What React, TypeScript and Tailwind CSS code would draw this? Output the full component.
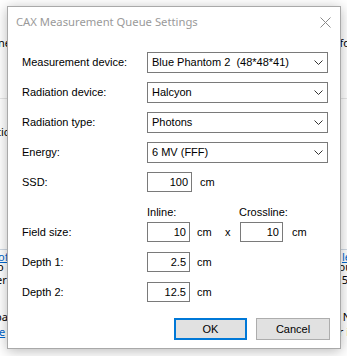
const CONTENT_FONT = "font-['Liberation_Sans',Arial,sans-serif]"

function Chevron() {
  return (
    <svg width="9" height="5" viewBox="0 0 9 5" fill="none" stroke="#333" strokeWidth="1">
      <path d="M0.5 0.5 L4.5 4.5 L8.5 0.5" />
    </svg>
  )
}

function Combo({ value }: { value: string }) {
  return (
    <div className="flex items-center justify-between w-[181px] h-[21px] border border-[#7a7a7a] bg-white pl-[4px] pr-[4px]">
      <span className="whitespace-pre leading-none">{value}</span>
      <Chevron />
    </div>
  )
}

function NumBox({ value, w = 'w-[43px]' }: { value: string; w?: string }) {
  return (
    <div className={`flex items-center justify-end h-[20px] border border-[#7a7a7a] bg-white pr-[3px] ${w}`}>
      <span className="leading-none">{value}</span>
    </div>
  )
}

// page behind the dialog, only its edges show
function Background() {
  return (
    <div className="flex flex-col text-[11px] text-black font-['Noto_Sans',sans-serif]">
      <div className="mt-[37px] h-[12px] leading-[12px] flex justify-between">
        <span className="-ml-[2px]">ne</span>
        <span className="mr-[-3px]">fo</span>
      </div>
      <div className="mt-[49px] h-px bg-[#e6e6e6]" />
      <div className="mt-[27px] h-[12px] leading-[12px] flex justify-between">
        <span className="-ml-[3px]">tic</span>
        <span />
      </div>
      <div className="mt-[111px] h-px bg-[#cfd9e4]" />
      <div className="mt-[2px] h-[10px] leading-[10px] flex justify-between text-[#0066cc]">
        <span className="-ml-[2px] underline">of</span>
        <span className="mr-[-4px] underline">le</span>
      </div>
      <div className="h-[10px] leading-[10px] flex justify-between">
        <span className="-ml-[3px]">o</span>
        <span className="mr-[-5px]">ou</span>
      </div>
      <div className="mt-[3px] h-[10px] leading-[10px] flex justify-between">
        <span className="-ml-[4px]">er</span>
        <span className="mr-[-1px]">5</span>
      </div>
      <div className="mt-[27px] h-[10px] leading-[10px] flex justify-between">
        <span className="-ml-[5px]">pa</span>
        <span className="mr-[-4px]">N</span>
      </div>
      <div className="mt-[5px] h-[10px] leading-[10px] flex justify-between text-[#0066cc]">
        <span className="-ml-[1px] underline">e</span>
        <span className="mr-[-2px] text-black">r i</span>
      </div>
    </div>
  )
}

function Dialog() {
  return (
    <div className="absolute left-[7px] top-[6px] w-[334px] h-[343px] bg-white border border-[#a9a9a9] shadow-[0_2px_12px_rgba(0,0,0,0.28)] flex flex-col">
      {/* title bar */}
      <div className="h-[30px] flex items-center justify-between pl-[8px] pr-[9px]">
        <span className="text-[11.25px] text-[#9a9a9a] font-['Noto_Sans',sans-serif]">CAX Measurement Queue Settings</span>
        <svg width="11" height="11" viewBox="0 0 11 11" stroke="#8a8a8a" strokeWidth="1">
          <path d="M0.5 0.5 L10.5 10.5 M10.5 0.5 L0.5 10.5" />
        </svg>
      </div>

      <div className={`flex flex-col pl-[14px] text-[11px] text-black ${CONTENT_FONT}`}>
        <div className="mt-[15px] flex items-center h-[21px]">
          <span className="w-[125px]">Measurement device:</span>
          <Combo value="Blue Phantom 2  (48*48*41)" />
        </div>
        <div className="mt-[9px] flex items-center h-[21px]">
          <span className="w-[125px]">Radiation device:</span>
          <Combo value="Halcyon" />
        </div>
        <div className="mt-[9px] flex items-center h-[21px]">
          <span className="w-[125px]">Radiation type:</span>
          <Combo value="Photons" />
        </div>
        <div className="mt-[9px] flex items-center h-[21px]">
          <span className="w-[125px]">Energy:</span>
          <Combo value="6 MV (FFF)" />
        </div>

        <div className="mt-[9px] flex items-center h-[20px]">
          <span className="w-[125px]">SSD:</span>
          <NumBox value="100" w="w-[45px]" />
          <span className="ml-[8px]">cm</span>
        </div>

        <div className="mt-[14px] flex items-center h-[13px] leading-[13px]">
          <span className="w-[125px]" />
          <span className="w-[92px]">Inline:</span>
          <span>Crossline:</span>
        </div>
        <div className="mt-[3px] flex items-center h-[20px]">
          <span className="w-[125px]">Field size:</span>
          <NumBox value="10" />
          <span className="ml-[7px] w-[28px]">cm</span>
          <span className="w-[15px]">x</span>
          <NumBox value="10" />
          <span className="ml-[9px]">cm</span>
        </div>

        <div className="mt-[10px] flex items-center h-[20px]">
          <span className="w-[125px]">Depth 1:</span>
          <NumBox value="2.5" />
          <span className="ml-[7px]">cm</span>
        </div>
        <div className="mt-[10px] flex items-center h-[20px]">
          <span className="w-[125px]">Depth 2:</span>
          <NumBox value="12.5" />
          <span className="ml-[7px]">cm</span>
        </div>

        <div className="mt-[16px] flex justify-end gap-[9px] pr-[10px]">
          <button className="w-[73px] h-[22px] bg-[#e1e1e1] border-2 border-[#0078d7] text-[11px] text-black">OK</button>
          <button className="w-[74px] h-[22px] bg-[#e1e1e1] border border-[#adadad] text-[11px] text-black">Cancel</button>
        </div>
      </div>
    </div>
  )
}

export default function App() {
  return (
    <div className="relative w-[347px] h-[356px] overflow-hidden bg-white">
      <Background />
      <Dialog />
    </div>
  )
}
